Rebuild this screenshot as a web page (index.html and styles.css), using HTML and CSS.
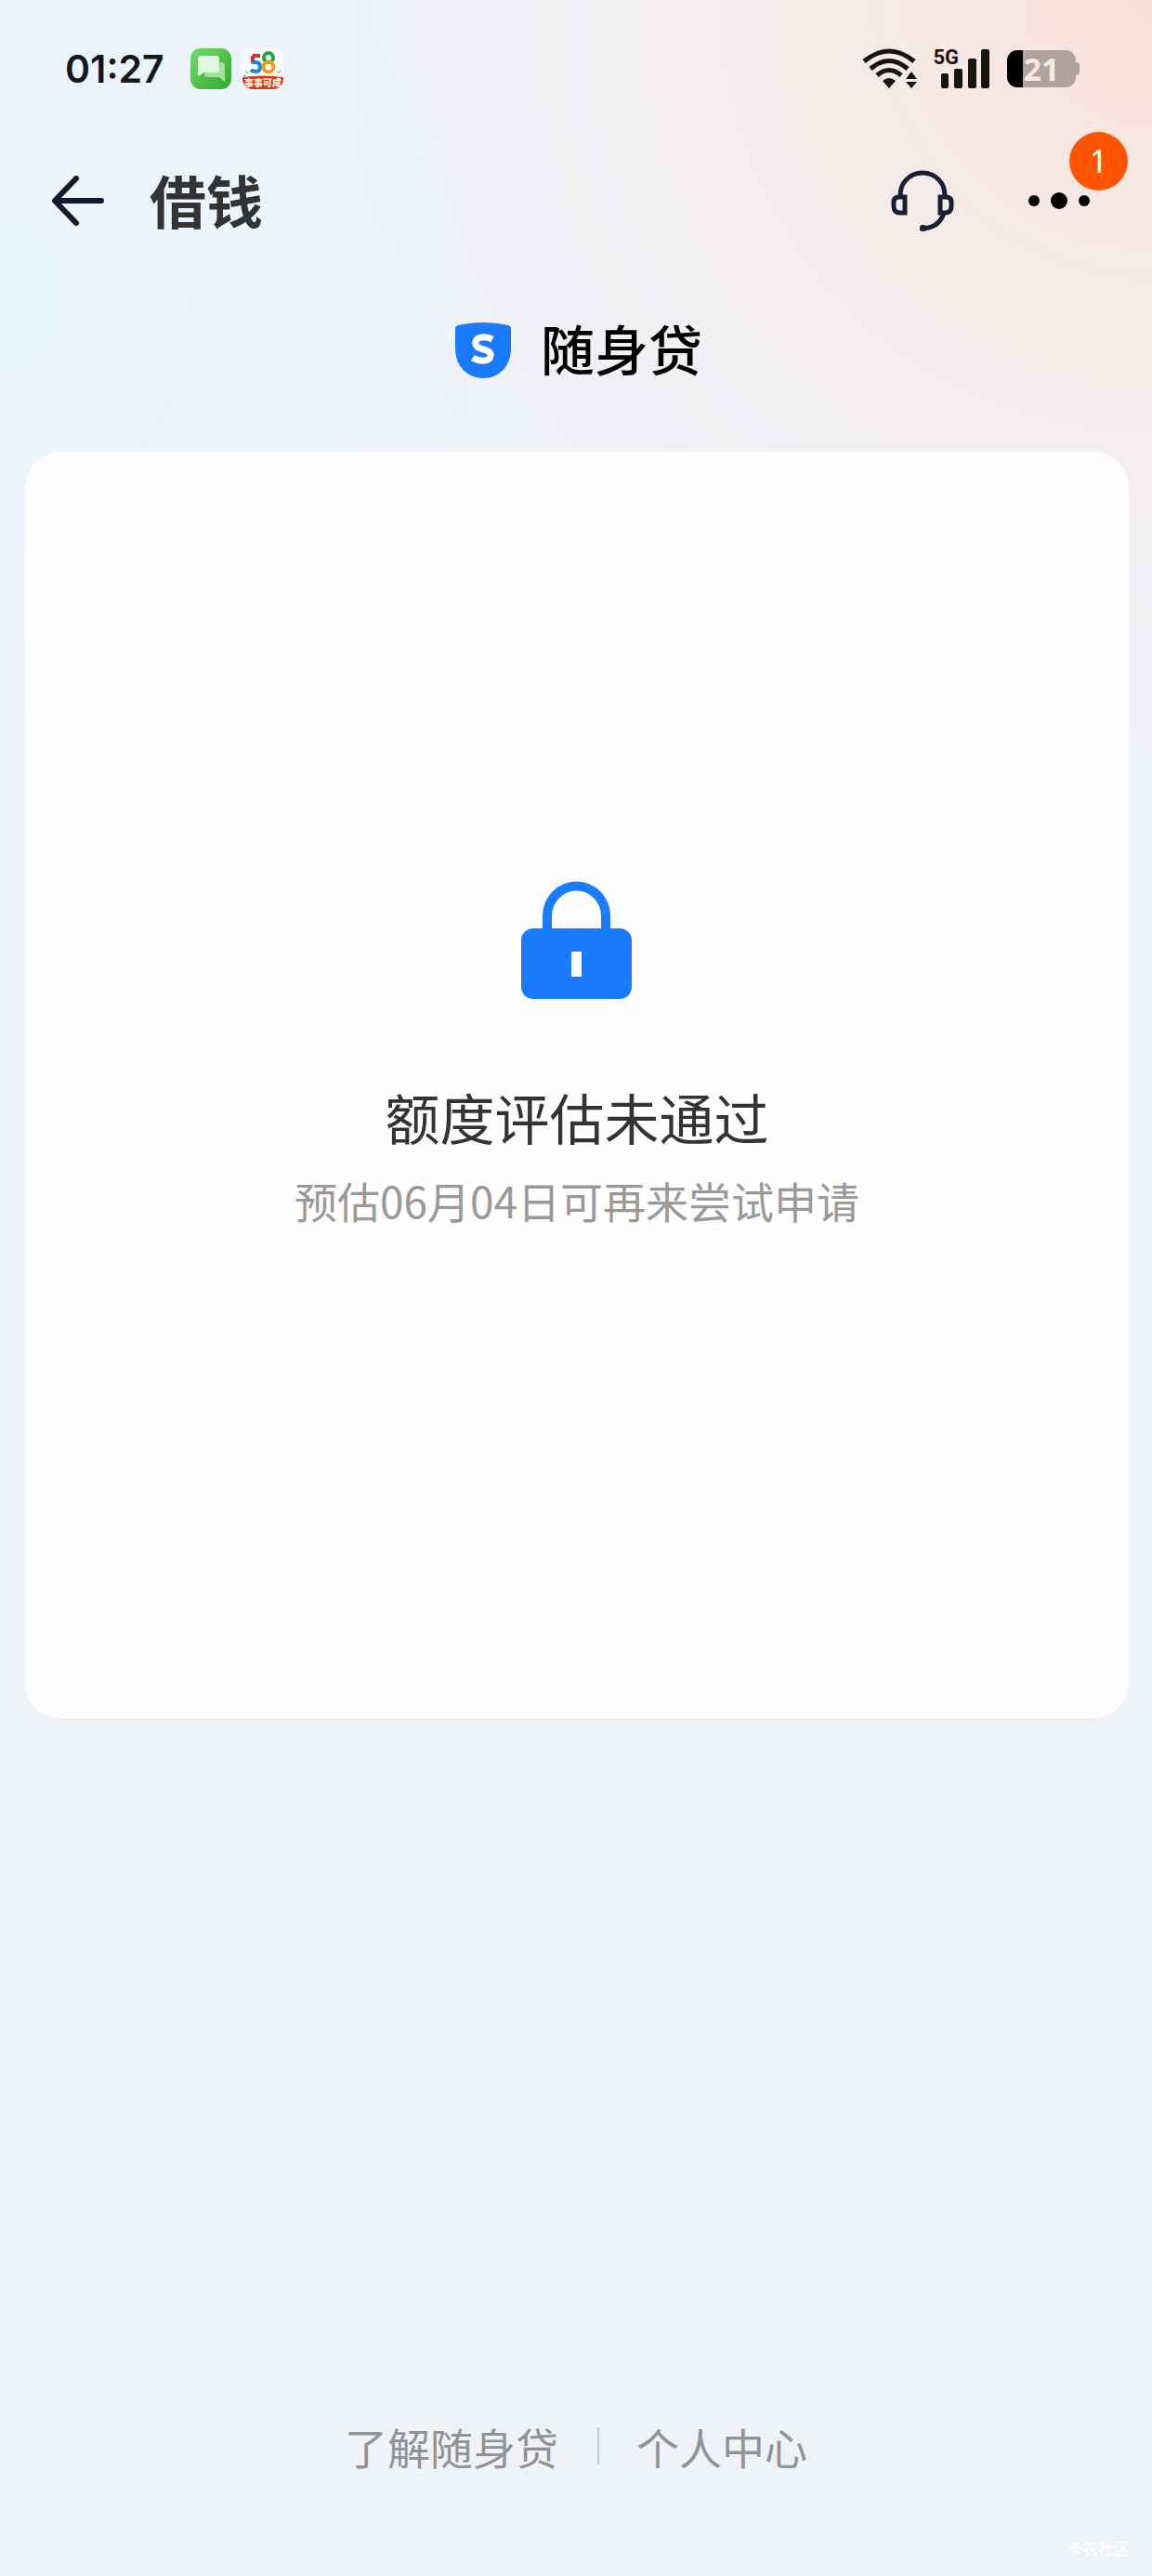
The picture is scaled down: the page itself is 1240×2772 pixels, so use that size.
FILE: index.html
```html
<!DOCTYPE html>
<html lang="zh-CN">
<head>
<meta charset="utf-8">
<meta name="viewport" content="width=device-width, initial-scale=1">
<title>借钱</title>
<link rel="stylesheet" href="styles.css">
</head>
<body>
<div class="status">
  <div class="status-left">
    <time class="clock">01:27</time>
    <svg class="app-icon" viewBox="0 0 44 44" aria-hidden="true">
      <defs><linearGradient id="green" x1="0" y1="0" x2="1" y2="1"><stop offset="0" stop-color="#6fe069"/><stop offset="1" stop-color="#32a82c"/></linearGradient></defs>
      <rect width="44" height="44" rx="11" fill="url(#green)"/>
      <path d="M19 15h15q3 0 3 3v18l-6-5H18q-3 0-3-3z" fill="#a4e09e"/>
      <path d="M11 8h17q3 0 3 3v12q0 3-3 3H14l-5 4-1-1V11q0-3 3-3z" fill="#e2f7df"/>
    </svg>
    <svg class="app-icon" viewBox="0 0 44 44" aria-hidden="true">
      <defs><clipPath id="round"><rect width="44" height="44" rx="11"/></clipPath></defs>
      <g clip-path="url(#round)">
        <rect width="44" height="44" fill="#fff"/>
        <path d="M0 31q22-3 44 0v13H0z" fill="#da3a1c"/>
        <path d="M19 8h-8" stroke="#e02b2b" stroke-width="4" fill="none"/>
        <path d="M11 8v8" stroke="#d42c4a" stroke-width="4" fill="none"/>
        <path d="M10 15h4q5 0 5 5t-5 5q-3 0-5-2" stroke="#1684d8" stroke-width="4" fill="none"/>
        <circle cx="28" cy="10" r="5" stroke="#25a63c" stroke-width="4" fill="none"/>
        <circle cx="28" cy="20" r="5.500" stroke="#f39a1d" stroke-width="4" fill="none"/>
        <path d="M3 24l3 3M41 24l-3 3M1 29l3 1" stroke="#48a868" stroke-width="1"/>
        <text class="app-label" x="22" y="41" text-anchor="middle">事事可成</text>
      </g>
    </svg>
  </div>
  <div class="status-right">
    <svg class="wifi" viewBox="0 0 60 44" aria-hidden="true">
      <g fill="none" stroke="#171412" stroke-width="5">
        <path d="M2 14Q29-8 56 14"/><path d="M9 22Q29 5 49 22"/><path d="M16 29Q29 18 42 29"/>
      </g>
      <path d="M22 35q7-6 14 0l-7 8z" fill="#171412"/>
      <path d="M47 33l6-8 6 8zM47 36h12l-6 7z" fill="#171412"/>
    </svg>
    <div class="signal">
      <span class="network">5G</span>
      <svg class="bars" viewBox="0 0 60 44" aria-hidden="true">
        <g fill="#171412"><rect x="7" y="27" width="8" height="16" rx="2"/><rect x="21" y="22" width="9" height="21" rx="2"/><rect x="36" y="11" width="9" height="32" rx="2"/><rect x="50" y="1" width="9" height="42" rx="2"/></g>
      </svg>
    </div>
    <div class="battery"><span>21</span></div>
  </div>
</div>

<header class="nav">
  <button class="icon-button" type="button" aria-label="返回">
    <svg class="back" viewBox="0 0 58 54" aria-hidden="true"><path d="M27 3L4 27l23 24M5 27h49" fill="none" stroke="#14172e" stroke-width="6" stroke-linecap="round" stroke-linejoin="round"/></svg>
  </button>
  <h1 class="nav-title">借钱</h1>
  <button class="icon-button" type="button" aria-label="客服">
    <svg class="headset" viewBox="0 0 68 68" aria-hidden="true">
      <g fill="none" stroke="#152038" stroke-width="5"><path d="M10 29Q10 18 16 12Q23 4 34 4T52 12Q58 18 58 29"/><path d="M15 30v17h-5q-7 0-7-7v-5q0-5 6-5zM53 30v17h5q7 0 7-7v-5q0-5-6-5z"/><path d="M57 47Q52 63 34 64"/></g>
      <rect x="31" y="60" width="7" height="7" rx="3" fill="#152038"/>
    </svg>
  </button>
  <button class="icon-button more" type="button" aria-label="更多">
    <svg class="dots" viewBox="0 0 66 20" aria-hidden="true"><circle cx="6" cy="10" r="6"/><circle cx="33" cy="10" r="9"/><circle cx="60" cy="10" r="6"/></svg>
    <span class="badge">1</span>
  </button>
</header>

<div class="brand">
  <svg class="shield" viewBox="0 0 60 60" aria-hidden="true">
    <path d="M3 3Q30-3 57 3q3 1 3 4v21c0 19-13 32-30 32S0 47 0 28V7q0-3 3-4z" fill="#1b7bff"/>
    <path d="M40 18Q34 15 28 16c-8 1-8 10-1 12 5 2 12 2 11 8-1 7-13 6-19 2" fill="none" stroke="#fff" stroke-width="7"/>
  </svg>
  <span>随身贷</span>
</div>

<main class="card">
  <svg class="lock" viewBox="0 0 120 128" aria-hidden="true">
    <path d="M28 54V38a31 32 0 0 1 63 0v16" fill="none" stroke="#1b7bff" stroke-width="10"/>
    <rect y="51" width="119" height="76" rx="13" fill="#1b7bff"/>
    <rect x="54" y="76" width="11" height="27" rx="1" fill="#fff"/>
  </svg>
  <h2 class="result">额度评估未通过</h2>
  <p class="hint">预估06月04日可再来尝试申请</p>
</main>

<footer class="footer">
  <nav class="links">
    <a href="#about">了解随身贷</a>
    <a href="#profile">个人中心</a>
  </nav>
  <span class="mark">卡农社区</span>
</footer>
</body>
</html>
```
FILE: styles.css
```css
* {
  box-sizing: border-box;
}

body {
  margin: 0;
  min-height: 100vh;
  display: flex;
  flex-direction: column;
  font-family: "Noto Sans CJK SC", sans-serif;
  color: #333;
  background-color: #eff3f8;
  background-image:
    radial-gradient(circle 900px at 100% 0, #f9e1d8 0, #f8e6e0cc 28%, #f5ebec88 60%, #f5ebec00 100%),
    radial-gradient(ellipse 600px 700px at 0 320px, #e8f5fd 0, #e9f3fd88 50%, #e9f3fd00 100%);
}

h1,
h2,
p {
  margin: 0;
  font-weight: 400;
}

.status {
  display: flex;
  justify-content: space-between;
  align-items: center;
  height: 148px;
  padding: 0 82px 0 70px;
}

.status-left,
.status-right {
  display: flex;
  align-items: center;
}

.status-left {
  gap: 12px;
}

.status-right {
  gap: 18px;
}

.clock {
  margin-right: 16px;
  font: 600 41px/44px Inter, sans-serif;
  color: #14181c;
}

.app-icon {
  width: 44px;
  height: 44px;
}

.app-label {
  font: 900 10px "Noto Sans CJK SC", sans-serif;
  fill: #fff3dc;
}

.wifi,
.bars {
  display: block;
  width: 60px;
  height: 44px;
}

.signal {
  position: relative;
}

.network {
  position: absolute;
  top: 0;
  right: 34px;
  font: 700 22px/20px Roboto, sans-serif;
  color: #171412;
}

.battery {
  position: relative;
  width: 74px;
  height: 40px;
  border-radius: 11px;
  background: linear-gradient(90deg, #000 17px, #b0a29e 17px);
  font: 700 34px/40px "Noto Sans", sans-serif;
  text-align: center;
  color: #f6e8e3;
}

.battery::after {
  content: "";
  position: absolute;
  top: 13px;
  left: 100%;
  width: 4px;
  height: 14px;
  border-radius: 0 4px 4px 0;
  background: #b0a29e;
}

.nav {
  display: flex;
  align-items: center;
  height: 136px;
  padding: 0 67px 0 55px;
}

.icon-button {
  display: flex;
  padding: 0;
  border: 0;
  background: none;
}

.back {
  width: 58px;
  height: 54px;
}

.nav-title {
  flex: 1;
  padding: 0 0 2px 48px;
  font-size: 61px;
  line-height: 80px;
  font-weight: 700;
}

.headset {
  width: 68px;
  height: 68px;
}

.more {
  position: relative;
  margin-left: 80px;
}

.dots {
  width: 66px;
  height: 20px;
}

.badge {
  position: absolute;
  right: -41px;
  bottom: 21px;
  width: 63px;
  height: 63px;
  border-radius: 50%;
  background: #ff5500;
  color: #fff;
  font: 400 34px/63px "Noto Sans", sans-serif;
  text-align: center;
}

.brand {
  display: flex;
  justify-content: center;
  align-items: center;
  gap: 32px;
  height: 186px;
  margin-bottom: 16px;
  padding-left: 6px;
  font-size: 58px;
  line-height: 80px;
  font-weight: 500;
  color: #000;
}

.brand span {
  padding-bottom: 6px;
}

.shield {
  width: 60px;
  height: 60px;
}

.card {
  display: flex;
  flex-direction: column;
  align-items: center;
  margin: 0 25px 0 27px;
  padding: 462px 24px 518px;
  border-radius: 38px;
  background: #fefefe;
}

.lock {
  width: 120px;
  height: 128px;
  margin-bottom: 81px;
}

.result {
  margin-bottom: 4px;
  font-size: 59px;
  line-height: 90px;
}

.hint {
  font-size: 46px;
  line-height: 80px;
  color: #999;
}

.footer {
  display: flex;
  flex-direction: column;
  margin-top: auto;
  padding: 40px 24px 18px;
}

.links {
  display: flex;
  justify-content: center;
  align-items: center;
  margin-bottom: 58px;
}

.links a {
  padding: 0 42px;
  font-size: 46px;
  line-height: 80px;
  color: #919397;
  text-decoration: none;
}

.links a + a {
  background: linear-gradient(#c5c8cd, #c5c8cd) left center / 2px 40px no-repeat;
}

.mark {
  align-self: flex-end;
  font-size: 17px;
  line-height: 24px;
  color: #fff;
}
```
